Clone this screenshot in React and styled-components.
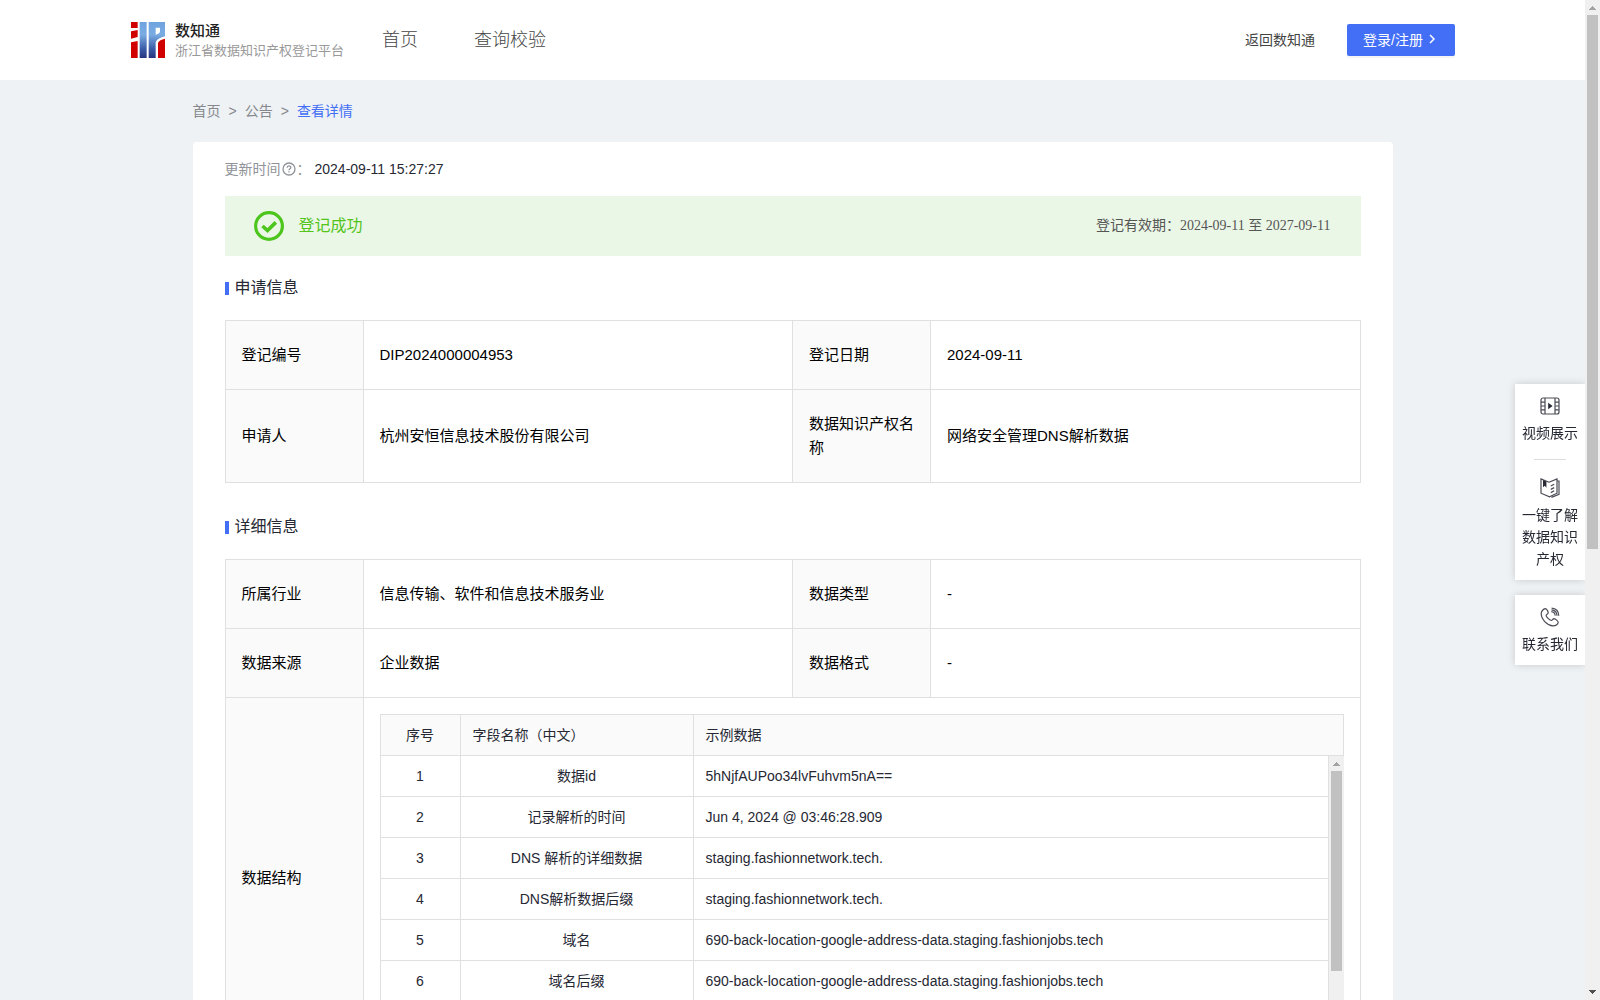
import styled, { createGlobalStyle } from "styled-components";

const sans = `"Liberation Sans", "Noto Sans CJK SC", sans-serif`;
const serif = `"Liberation Serif", "Noto Sans CJK SC", serif`;

const GlobalStyle = createGlobalStyle`
  * {
    box-sizing: border-box;
  }
  body {
    margin: 0;
    background: #eef2f5;
    color: #262833;
    font-family: ${sans};
    font-size: 14px;
    line-height: 22px;
  }
  a {
    color: inherit;
    text-decoration: none;
  }
`;

const Screen = styled.div`
  display: flex;
  height: 100vh;
`;

const Page = styled.div`
  flex: 1;
  min-width: 0;
  overflow-y: auto;
  scrollbar-width: none;
`;

const Rail = styled.div`
  display: flex;
  flex-direction: column;
  flex: none;
  width: 15px;
  background: #f0f0f0;
`;

const Track = styled.div`
  flex: 1;
  padding: 0 2px;
`;

const Thumb = styled.div`
  height: ${(props) => props.$size};
  background: #c1c1c1;
`;

const Header = styled.header`
  display: flex;
  align-items: center;
  height: 80px;
  padding: 0 130px 0 131px;
  background: #fff;
`;

const Brand = styled.a`
  display: flex;
  align-items: center;
  gap: 10px;
`;

const BrandName = styled.strong`
  display: block;
  color: #222;
  font-size: 15px;
  font-weight: 500;
  line-height: 22px;
`;

const BrandDesc = styled.span`
  display: block;
  color: #999;
  font-size: 13px;
  line-height: 18px;
`;

const Nav = styled.nav`
  display: flex;
  flex: 1;
  gap: 56px;
  margin-left: 38px;
  color: #444;
  font-size: 18px;
  font-weight: 300;
`;

const BackLink = styled.a`
  margin-right: 32px;
  color: #444;
`;

const LoginButton = styled.button`
  display: flex;
  align-items: center;
  gap: 4px;
  width: 108px;
  height: 32px;
  padding: 0 16px 2px;
  border: 0;
  border-radius: 2px;
  background: #436ff6;
  box-shadow: 0 2px 0 rgba(0, 0, 0, 0.04);
  color: #fff;
  font-family: inherit;
  font-size: 14px;
  white-space: nowrap;
  cursor: pointer;
`;

const Container = styled.main`
  max-width: 1200px;
  margin: 0 auto;
  padding-bottom: 320px;
`;

const Breadcrumb = styled.nav`
  display: flex;
  gap: 8px;
  padding: 20px 0;
  color: #86888c;
`;

const Current = styled.a`
  && {
    color: #436ff6;
  }
`;

const Card = styled.section`
  padding: 16px 32px;
  border-radius: 4px;
  background: #fff;
`;

const UpdateRow = styled.div`
  display: flex;
  align-items: center;
  color: #909399;
`;

const UpdateTime = styled.time`
  margin-left: 4px;
  color: #262833;
`;

const Banner = styled.div`
  display: flex;
  align-items: center;
  height: 60px;
  margin-top: 16px;
  padding: 0 30px 0 28px;
  background: #ebf7e6;
`;

const BannerTitle = styled.span`
  flex: 1;
  margin-left: 14px;
  color: #52c41a;
  font-size: 16px;
`;

const Validity = styled.span`
  color: #555;
  font-family: ${serif};
`;

const SectionTitle = styled.h2`
  display: flex;
  align-items: center;
  gap: 6px;
  margin: 20px 0;
  font-size: 16px;
  font-weight: 400;
  line-height: 24px;

  &::before {
    content: "";
    width: 4px;
    height: 13px;
    background: #436ff6;
  }

  table + & {
    margin-top: 32px;
  }
`;

const InfoTable = styled.table`
  width: 100%;
  border-collapse: collapse;
  table-layout: fixed;
  color: #000;
  font-size: 15px;
  line-height: 24px;
`;

const Col = styled.col`
  width: ${(props) => props.$width || "auto"};
`;

const Label = styled.th`
  padding: 22px 16px;
  border: 1px solid #e0e0e0;
  background: #fafafa;
  font-weight: 400;
  text-align: left;
`;

const Value = styled.td`
  padding: ${(props) => (props.$nested ? "16px" : "22px 16px")};
  border: 1px solid #e0e0e0;
`;

const FieldBox = styled.div`
  border: 1px solid #e0e0e0;
  border-width: 1px 0 0 1px;
`;

const FieldBody = styled.div`
  display: flex;
  height: 286px;
`;

const FieldScroll = styled.div`
  flex: 1;
  min-width: 0;
  overflow-y: auto;
  scrollbar-width: none;
`;

const FieldTable = styled.table`
  width: 100%;
  border-collapse: separate;
  border-spacing: 0;
  table-layout: fixed;
  color: #262833;
  font-size: 14px;
  line-height: 22px;
`;

const cell = `
  height: 41px;
  padding: 0 12px;
  border: 1px solid #e0e0e0;
  border-width: 0 1px 1px 0;
`;

const FieldHead = styled.th`
  ${cell}
  background: #fafafa;
  font-weight: 400;
  text-align: ${(props) => props.$align || "left"};
`;

const FieldCell = styled.td`
  ${cell}
  text-align: ${(props) => props.$align || "left"};
`;

const SideBar = styled.aside`
  position: fixed;
  top: 384px;
  right: 15px;
  display: flex;
  flex-direction: column;
  gap: 15px;
  width: 70px;
`;

const SidePanel = styled.div`
  background: #fff;
  box-shadow: 0 0 8px rgba(0, 0, 0, 0.16);
  clip-path: inset(-12px 0 -12px -12px);
`;

const SideItem = styled.a`
  display: flex;
  flex-direction: column;
  align-items: center;
  gap: 6px;
  padding: 12px 6px 10px;
  text-align: center;
`;

const Divider = styled.hr`
  width: 32px;
  height: 1px;
  margin: 5px auto 6px;
  border: 0;
  background: #ddd;
`;

const Logo = () => (
  <svg width="34" height="36" viewBox="0 0 102 108">
    <defs>
      <linearGradient id="blue" gradientUnits="userSpaceOnUse" x1="0" y1="0" x2="0" y2="108">
        <stop offset="0" stopColor="#6fa3df" />
        <stop offset="0.35" stopColor="#7aace3" />
        <stop offset="0.75" stopColor="#3a5ba6" />
        <stop offset="1" stopColor="#27347f" />
      </linearGradient>
    </defs>
    <path fill="#d00000" d="M0 0h20v18H0zM0 28l20-4v21L0 50zM0 61l20-4v51H0z" />
    <path fill="url(#blue)" d="M26 0h21v108H26z" />
    <path
      fill="url(#blue)"
      fillRule="evenodd"
      d="M53 0h49v43c-14 3-24 8-28 18v47H53zM74 17v21c9-2 13-5 13-10V17z"
    />
    <path fill="#d00000" d="M81 108V62c3-6 10-10 21-12v58z" />
  </svg>
);

const Chevron = () => (
  <svg width="10" height="12" viewBox="0 0 10 12" fill="none" stroke="#fff" strokeWidth="1.5">
    <path d="M3 2l4 4 -4 4" />
  </svg>
);

const QuestionIcon = () => (
  <svg width="16" height="16" viewBox="0 0 16 16" fill="none" stroke="#909399" strokeWidth="1.3">
    <circle cx="8" cy="8" r="6" />
    <path d="M6.2 6.7c0-2.4 3.6-2.3 3.6-.2 0 1.4-1.8 1.2-1.8 2.8M8 10.2v1.3" />
  </svg>
);

const SuccessIcon = () => (
  <svg width="32" height="32" viewBox="0 0 32 32" fill="none" stroke="#4cc51c">
    <circle cx="16" cy="16" r="13.4" strokeWidth="3.2" />
    <path d="M9.5 16l5 4.6 8.3-8.2" strokeWidth="3.6" />
  </svg>
);

const VideoIcon = () => (
  <svg width="20" height="20" viewBox="0 0 20 20" fill="none" stroke="#4a4b55" strokeWidth="1.2">
    <rect x="1" y="2" width="18" height="16" rx="2" />
    <path d="M5 2v16M15 2v16M1 6.2h4M1 10h4M1 13.8h4M15 6.2h4M15 10h4M15 13.8h4" />
    <path d="M8.2 6.8v6.4l4.4-3.2z" fill="#262833" stroke="none" />
  </svg>
);

const BookIcon = () => (
  <svg width="20" height="20" viewBox="0 0 20 20" fill="none" stroke="#4a4b55" strokeWidth="1.2">
    <path d="M9 4.2L1 .9v14.3l8.500 3.600 7.500-3.600V.9L9 4.200" />
    <path d="M17 3h2v13.400l-7.600 3M10.800 8l3.400-1.800M10.800 11.400l3.400-1.800M10.800 14.600l3.400-1.800" />
    <path d="M3 2v7.200l1.800-1.400L6.400 9.800V3.400z" fill="#262833" stroke="none" />
  </svg>
);

const PhoneIcon = () => (
  <svg width="20" height="20" viewBox="0 0 20 20" fill="none" stroke="#4a4b55" strokeWidth="1.2">
    <path d="M5.3 1.6C3.6 1.9 1.2 4 1.2 6.6c0 5.8 6.2 12 11.6 12.3 2.6 0 5-1.6 5.4-3.5.2-1.2-2.8-3.7-4.3-3.8-1.1 0-1.6 1.900-2.700 1.900C9.500 13.300 6.200 9.900 6.100 8.500c0-1.100 2.100-1.500 2.100-2.800C8.200 4.300 6.500 1.500 5.300 1.600z" />
    <path d="M11.3 4.700c2.200.2 3.700 1.700 4 4M11.600 1.200c4.200.3 7 3.300 7.200 7.600M11.500 2.900c3.200.3 5.300 2.600 5.600 5.800" />
  </svg>
);

const ArrowUp = () => (
  <svg width="15" height="15" viewBox="0 0 15 15" fill="#a3a3a3" shapeRendering="crispEdges">
    <path d="M4 10h7V9h-1V8H9V7H8V6H7v1H6v1H5v1H4z" />
  </svg>
);

const ArrowDown = () => (
  <svg width="15" height="15" viewBox="0 0 15 15" fill="#505050" shapeRendering="crispEdges">
    <path d="M4 5h7v1h-1v1H9v1H8v1H7V8H6V7H5V6H4z" />
  </svg>
);

const ScrollRail = ({ size }) => (
  <Rail aria-hidden="true">
    <ArrowUp />
    <Track>
      <Thumb $size={size} />
    </Track>
    <ArrowDown />
  </Rail>
);

const fields = [
  ["数据id", "5hNjfAUPoo34lvFuhvm5nA=="],
  ["记录解析的时间", "Jun 4, 2024 @ 03:46:28.909"],
  ["DNS 解析的详细数据", "staging.fashionnetwork.tech."],
  ["DNS解析数据后缀", "staging.fashionnetwork.tech."],
  ["域名", "690-back-location-google-address-data.staging.fashionjobs.tech"],
  ["域名后缀", "690-back-location-google-address-data.staging.fashionjobs.tech"],
];

const InfoRow = ({ items }) => (
  <tr>
    {items.map(([label, value]) => [
      <Label key={label} scope="row">
        {label}
      </Label>,
      <Value key={`${label}-value`}>{value}</Value>,
    ])}
  </tr>
);

const InfoColumns = () => (
  <colgroup>
    <Col $width="138px" />
    <Col />
    <Col $width="138px" />
    <Col />
  </colgroup>
);

const FieldColumns = () => (
  <colgroup>
    <Col $width="80px" />
    <Col $width="233px" />
    <Col />
  </colgroup>
);

const App = () => {
  return (
    <Screen>
      <GlobalStyle />
      <Page>
        <Header>
          <Brand href="#">
            <Logo />
            <span>
              <BrandName>数知通</BrandName>
              <BrandDesc>浙江省数据知识产权登记平台</BrandDesc>
            </span>
          </Brand>
          <Nav>
            <a href="#">首页</a>
            <a href="#">查询校验</a>
          </Nav>
          <BackLink href="#">返回数知通</BackLink>
          <LoginButton>
            登录/注册
            <Chevron />
          </LoginButton>
        </Header>

        <Container>
          <Breadcrumb>
            <a href="#">首页</a>
            <span>&gt;</span>
            <a href="#">公告</a>
            <span>&gt;</span>
            <Current href="#">查看详情</Current>
          </Breadcrumb>
          <Card>
            <UpdateRow>
              更新时间
              <QuestionIcon />
              ：<UpdateTime>2024-09-11 15:27:27</UpdateTime>
            </UpdateRow>
            <Banner>
              <SuccessIcon />
              <BannerTitle>登记成功</BannerTitle>
              <Validity>登记有效期：2024-09-11 至 2027-09-11</Validity>
            </Banner>

            <SectionTitle>申请信息</SectionTitle>
            <InfoTable>
              <InfoColumns />
              <tbody>
                <InfoRow
                  items={[
                    ["登记编号", "DIP2024000004953"],
                    ["登记日期", "2024-09-11"],
                  ]}
                />
                <InfoRow
                  items={[
                    ["申请人", "杭州安恒信息技术股份有限公司"],
                    ["数据知识产权名称", "网络安全管理DNS解析数据"],
                  ]}
                />
              </tbody>
            </InfoTable>

            <SectionTitle>详细信息</SectionTitle>
            <InfoTable>
              <InfoColumns />
              <tbody>
                <InfoRow
                  items={[
                    ["所属行业", "信息传输、软件和信息技术服务业"],
                    ["数据类型", "-"],
                  ]}
                />
                <InfoRow
                  items={[
                    ["数据来源", "企业数据"],
                    ["数据格式", "-"],
                  ]}
                />
                <tr>
                  <Label scope="row">数据结构</Label>
                  <Value colSpan={3} $nested>
                    <FieldBox>
                      <FieldTable>
                        <FieldColumns />
                        <thead>
                          <tr>
                            <FieldHead $align="center">序号</FieldHead>
                            <FieldHead>字段名称（中文）</FieldHead>
                            <FieldHead>示例数据</FieldHead>
                          </tr>
                        </thead>
                      </FieldTable>
                      <FieldBody>
                        <FieldScroll>
                          <FieldTable>
                            <FieldColumns />
                            <tbody>
                              {fields.map(([name, sample], i) => (
                                <tr key={name}>
                                  <FieldCell $align="center">{i + 1}</FieldCell>
                                  <FieldCell $align="center">{name}</FieldCell>
                                  <FieldCell>{sample}</FieldCell>
                                </tr>
                              ))}
                            </tbody>
                          </FieldTable>
                        </FieldScroll>
                        <ScrollRail size="78%" />
                      </FieldBody>
                    </FieldBox>
                  </Value>
                </tr>
              </tbody>
            </InfoTable>
          </Card>
        </Container>
      </Page>
      <ScrollRail size="55%" />

      <SideBar>
        <SidePanel>
          <SideItem href="#">
            <VideoIcon />
            视频展示
          </SideItem>
          <Divider />
          <SideItem href="#">
            <BookIcon />
            一键了解数据知识产权
          </SideItem>
        </SidePanel>
        <SidePanel>
          <SideItem href="#">
            <PhoneIcon />
            联系我们
          </SideItem>
        </SidePanel>
      </SideBar>
    </Screen>
  );
};

export default App;
